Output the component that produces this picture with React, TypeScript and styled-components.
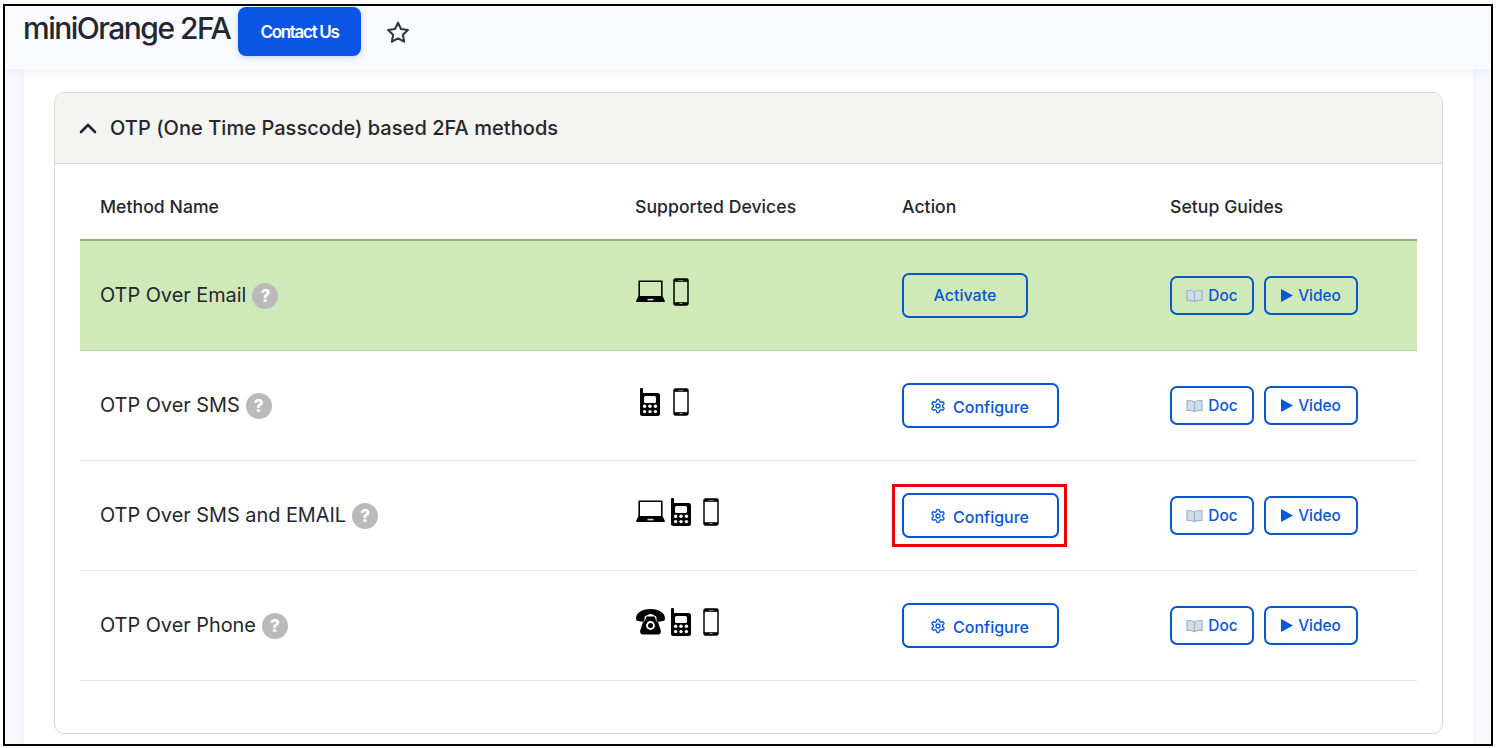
import React from 'react';
import styled, { createGlobalStyle } from 'styled-components';

const Global = createGlobalStyle`
  html, body { margin: 0; padding: 0; background: #fff; }
  body { font-family: Inter, "Liberation Sans", sans-serif; color: #24272d; }
`;

const LaptopIcon = () => (
  <svg width="29" height="23" viewBox="0 0 29 23">
    <path fill="#000" fillRule="evenodd" d="M3 0.5h23a.6.6 0 0 1 .6.6V17.5H2.4V1.1A.6.6 0 0 1 3 .5zM4 2v14h21V2z" />
    <path fill="#000" d="M2.2 16.500h24.600l2 4.200c.3.6 0 1.200-.7 1.200H.9c-.7 0-1-.6-.7-1.200z" />
    <rect x="11.500" y="18.800" width="6" height="1.600" fill="#d8dccb" />
  </svg>
);

const PhoneIcon = () => (
  <svg width="16" height="28" viewBox="0 0 16 28">
    <rect x="1" y="1" width="14" height="26" rx="1.400" fill="none" stroke="#000" strokeWidth="1.500" />
    <rect x="1" y="1" width="14" height="2.800" fill="#000" />
    <rect x="1" y="24.200" width="14" height="2.800" fill="#000" />
    <rect x="5.500" y="2" width="5" height=".8" fill="#999" />
    <rect x="6.500" y="25" width="3" height="1" fill="#999" />
  </svg>
);

const CellIcon = () => (
  <svg width="20" height="28" viewBox="0 0 20 28">
    <path fill="#000" fillRule="evenodd" d="M0 .9C0 .3.4 0 .9 0h1.200c.5 0 .9.3.9.9V5H17.500A2.500 2.500 0 0 1 20 7.500V25.500A2.500 2.500 0 0 1 17.500 28H2.500A2.500 2.500 0 0 1 0 25.500zM5.500 8A1.500 1.500 0 0 0 4 9.500V13.500A1.500 1.500 0 0 0 5.500 15H14.500A1.500 1.500 0 0 0 16 13.500V9.500A1.500 1.500 0 0 0 14.500 8z" />
    {[4.6, 10, 15.4].map(x =>
      [18.2, 23.6].map(y => <circle key={`${x}-${y}`} cx={x} cy={y} r="1.700" fill="#fff" />)
    )}
  </svg>
);

const DeskPhoneIcon = () => (
  <svg width="29" height="26" viewBox="0 0 29 26">
    <path fill="#000" d="M14.500 0C7 0 .8 3.200.1 8.200c-.3 2 .3 3.500 1.800 3.800l4.300.7c1.300.2 2-.6 2.200-1.800l.3-3.400c1.800-1 3.700-2.500 5.800-2.500s4 1.500 5.800 2.500l.3 3.400c.2 1.200.9 2 2.200 1.800l4.300-.7c1.500-.3 2.100-1.800 1.800-3.800C28.200 3.200 22 0 14.500 0z" />
    <path fill="#000" d="M10.500 7.500h8l1.500 4c.3.8 1 1.300 2 1.500l2.800 8.500c.5 2.200-.5 4-2.800 4H7c-2.300 0-3.300-1.800-2.800-4L7 13c1-.2 1.700-.7 2-1.500z" />
    <circle cx="14.500" cy="16.500" r="4.400" fill="#fff" />
    <circle cx="14.500" cy="16.500" r="2.500" fill="#000" />
  </svg>
);

const GearIcon = () => (
  <svg width="16" height="16" viewBox="0 0 24 24" fill="none" stroke="#0a55d8" strokeWidth="2" strokeLinecap="round" strokeLinejoin="round">
    <path d="M12.220 2h-.440a2 2 0 0 0-2 2v.180a2 2 0 0 1-1 1.730l-.430.250a2 2 0 0 1-2 0l-.150-.080a2 2 0 0 0-2.730.730l-.220.380a2 2 0 0 0 .730 2.730l.150.100a2 2 0 0 1 1 1.720v.510a2 2 0 0 1-1 1.740l-.150.090a2 2 0 0 0-.730 2.730l.220.380a2 2 0 0 0 2.730.730l.150-.080a2 2 0 0 1 2 0l.430.250a2 2 0 0 1 1 1.730V20a2 2 0 0 0 2 2h.440a2 2 0 0 0 2-2v-.180a2 2 0 0 1 1-1.730l.430-.250a2 2 0 0 1 2 0l.150.080a2 2 0 0 0 2.730-.730l.220-.390a2 2 0 0 0-.730-2.730l-.150-.080a2 2 0 0 1-1-1.740v-.500a2 2 0 0 1 1-1.740l.150-.090a2 2 0 0 0 .730-2.730l-.220-.380a2 2 0 0 0-2.730-.730l-.150.080a2 2 0 0 1-2 0l-.430-.250a2 2 0 0 1-1-1.730V4a2 2 0 0 0-2-2z" />
    <circle cx="12" cy="12" r="3" />
  </svg>
);

const BookIcon = () => (
  <svg width="17" height="14" viewBox="0 0 17 14" fill="#d3dde8" stroke="#9fb3d3" strokeWidth="1.200" strokeLinejoin="round">
    <path d="M8.500 3C7 1.700 4 1.300 1 1.600V11.500c2.800-.3 6 0 7.500 1.200 1.500-1.200 4.700-1.500 7.500-1.200V1.600C13 1.300 10 1.700 8.500 3z" />
    <path d="M8.500 3v9.700" />
  </svg>
);

const PlayIcon = () => (
  <svg width="12" height="13" viewBox="0 0 12 13">
    <path fill="#0a55e0" d="M0 0l12 6.500L0 13z" />
  </svg>
);

const StarIcon = () => (
  <svg width="26" height="25" viewBox="0 0 24 24" fill="none" stroke="#33363b" strokeWidth="2" strokeLinejoin="round">
    <path d="M12 2.600l2.900 6.100 6.600.9-4.800 4.600 1.200 6.600L12 17.600l-5.900 3.200 1.200-6.600-4.800-4.600 6.600-.9z" />
  </svg>
);

const ChevronIcon = () => (
  <svg width="18" height="11" viewBox="0 0 18 11" fill="none" stroke="#24272d" strokeWidth="2.600" strokeLinecap="round" strokeLinejoin="round">
    <path d="M2 9l7-7 7 7" />
  </svg>
);

type Device = 'laptop' | 'cell' | 'phone' | 'desk';

const deviceIcons: Record<Device, React.ReactNode> = {
  laptop: <LaptopIcon />,
  cell: <CellIcon />,
  phone: <PhoneIcon />,
  desk: <DeskPhoneIcon />,
};

const methods: { name: string; devices: Device[]; action: string; active?: boolean; boxed?: boolean }[] = [
  { name: 'OTP Over Email', devices: ['laptop', 'phone'], action: 'Activate', active: true },
  { name: 'OTP Over SMS', devices: ['cell', 'phone'], action: 'Configure' },
  { name: 'OTP Over SMS and EMAIL', devices: ['laptop', 'cell', 'phone'], action: 'Configure', boxed: true },
  { name: 'OTP Over Phone', devices: ['desk', 'cell', 'phone'], action: 'Configure' },
];

export default function App() {
  return (
    <>
      <Global />
      <Frame>
        <TopBar>
          <Title>miniOrange 2FA</Title>
          <ContactButton>Contact Us</ContactButton>
          <StarBox><StarIcon /></StarBox>
        </TopBar>
        <Sheet>
          <Accordion>
            <AccordionHead>
              <ChevronIcon />
              <AccordionTitle>OTP (One Time Passcode) based 2FA methods</AccordionTitle>
            </AccordionHead>
            <Table>
              <HeadRow>
                <HeadCell>Method Name</HeadCell>
                <HeadCell>Supported Devices</HeadCell>
                <HeadCell>Action</HeadCell>
                <HeadCell>Setup Guides</HeadCell>
              </HeadRow>
              {methods.map(m => (
                <Row key={m.name} $active={m.active}>
                  <NameCell>
                    {m.name}
                    <HelpBadge>?</HelpBadge>
                  </NameCell>
                  <Devices>
                    {m.devices.map((d, i) => <DeviceSlot key={i}>{deviceIcons[d]}</DeviceSlot>)}
                  </Devices>
                  <ActionCell>
                    <ActionBox $boxed={m.boxed}>
                      {m.action === 'Activate' ? (
                        <ActivateButton>Activate</ActivateButton>
                      ) : (
                        <ConfigureButton><GearIcon />Configure</ConfigureButton>
                      )}
                    </ActionBox>
                  </ActionCell>
                  <Guides>
                    <GuideButton $wide={false}><BookIcon />Doc</GuideButton>
                    <GuideButton $wide><PlayIcon />Video</GuideButton>
                  </Guides>
                </Row>
              ))}
            </Table>
          </Accordion>
        </Sheet>
      </Frame>
    </>
  );
}

const Frame = styled.div`
  margin: 4px 3px 0;
  width: 1490px;
  height: 742px;
  box-sizing: border-box;
  border: 2px solid #000;
  background: #f7f9fe;
  overflow: hidden;
`;
const TopBar = styled.header`
  position: relative;
  z-index: 1;
  height: 63px;
  display: flex;
  align-items: flex-start;
  padding-left: 18px;
  background: #f8faff;
  box-shadow: 0 3px 10px rgba(40, 50, 90, 0.06);
`;
const Title = styled.h1`
  margin: 5px 0 0;
  width: 209px;
  font-size: 30px;
  line-height: 34px;
  font-weight: 550;
  letter-spacing: -1.5px;
  white-space: nowrap;
  color: #24272d;
`;
const ContactButton = styled.button`
  margin: 1px 0 0 6px;
  width: 123px;
  height: 49px;
  border: none;
  border-radius: 8px;
  background: #0a55e6;
  box-shadow: 0 2px 6px rgba(10, 85, 230, 0.2);
  color: #fff;
  font: 600 17px Inter, sans-serif;
  letter-spacing: -1.3px;
`;
const StarBox = styled.div`
  margin: 14px 0 0 24px;
`;
const Sheet = styled.main`
  margin: 0 18px 0 19px;
  height: 680px;
  padding: 23px 30px 0;
  background: #fff;
  box-shadow: 0 0 8px rgba(40, 50, 90, 0.05);
`;
const Accordion = styled.section`
  width: 1389px;
  height: 642px;
  box-sizing: border-box;
  border: 1px solid #d8d8d8;
  border-radius: 10px;
  overflow: hidden;
`;
const AccordionHead = styled.div`
  height: 70px;
  display: flex;
  align-items: center;
  gap: 13px;
  padding-left: 24px;
  background: #f4f4f0;
  border-bottom: 1px solid #d8d8d8;
`;
const AccordionTitle = styled.span`
  font-size: 20px;
  font-weight: 500;
  letter-spacing: 0.05px;
  color: #24272d;
`;
const Table = styled.div`
  margin: 0 25px;
`;
const HeadRow = styled.div`
  display: grid;
  grid-template-columns: 535px 267px 268px 1fr;
  height: 77px;
  box-sizing: border-box;
  align-items: center;
  padding: 9px 0 0 20px;
  border-bottom: 2px solid #8fb27b;
`;
const HeadCell = styled.div`
  font-size: 17.600px;
  font-weight: 500;
  letter-spacing: 0.05px;
  color: #24272d;
`;
const Row = styled.div<{ $active?: boolean }>`
  display: grid;
  grid-template-columns: 535px 267px 268px 1fr;
  height: 110px;
  box-sizing: border-box;
  align-items: center;
  padding-left: 20px;
  background: ${p => (p.$active ? '#cfe9b8' : '#fff')};
  border-bottom: 1px solid ${p => (p.$active ? '#b9d3a4' : '#e4e4e4')};
`;
const NameCell = styled.div`
  display: flex;
  align-items: center;
  gap: 6px;
  margin-top: -2px;
  font-size: 19.880px;
  color: #24272d;
`;
const HelpBadge = styled.span`
  width: 26px;
  height: 26px;
  border-radius: 50%;
  background: #bababa;
  color: #fff;
  display: flex;
  align-items: center;
  justify-content: center;
  font-size: 17px;
  font-weight: 800;
  margin-top: 2px;
`;
const Devices = styled.div`
  display: flex;
  align-items: center;
  height: 28px;
  margin-top: -8px;
`;
const DeviceSlot = styled.span`
  width: 30.500px;
  display: flex;
  align-items: center;
  justify-content: center;
`;
const ActionCell = styled.div`
  display: flex;
`;
const ActionBox = styled.div<{ $boxed?: boolean }>`
  position: relative;
  display: flex;
  &::after {
    content: ${p => (p.$boxed ? "''" : 'none')};
    position: absolute;
    inset: -9px -8px -9px -10px;
    border: 3px solid #e8000b;
    pointer-events: none;
  }
`;
const BlueButton = styled.button`
  display: flex;
  align-items: center;
  justify-content: center;
  box-sizing: border-box;
  background: transparent;
  border: 2px solid #0a55d0;
  border-radius: 7px;
  color: #0a55d8;
  font: 500 15px Inter, sans-serif;
`;
const ActivateButton = styled(BlueButton)`
  width: 126px;
  height: 45px;
  padding-bottom: 2px;
  font-size: 16px;
`;
const ConfigureButton = styled(BlueButton)`
  width: 157px;
  height: 45px;
  padding: 2px 2px 0 0;
  gap: 7px;
  font-size: 16px;
  svg { margin-top: -1px; }
`;
const Guides = styled.div`
  display: flex;
  gap: 10px;
`;
const GuideButton = styled(BlueButton)<{ $wide: boolean }>`
  width: ${p => (p.$wide ? '94px' : '84px')};
  height: 39px;
  gap: 5px;
  padding-top: 1px;
  font-size: 15.400px;
`;
